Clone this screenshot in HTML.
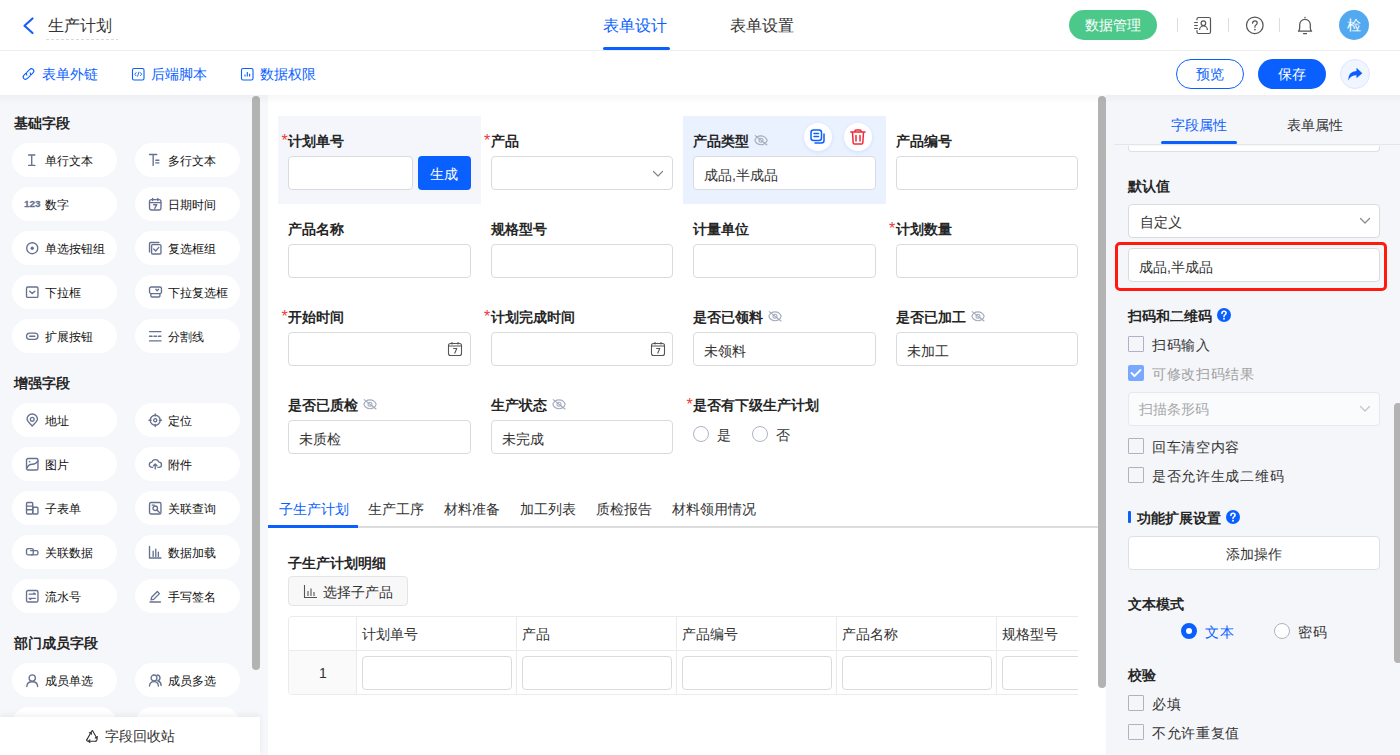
<!DOCTYPE html>
<html><head><meta charset="utf-8">
<style>
*{box-sizing:border-box;margin:0;padding:0}
html,body{width:1400px;height:755px;overflow:hidden;background:#fff;font-family:"Liberation Sans",sans-serif;color:#333;font-size:14px;line-height:20px}
.a{position:absolute}
.t{position:absolute;white-space:nowrap;font-size:14px;line-height:20px}
.b{font-weight:bold}
.blue{color:#0a5fff}
svg{position:absolute;overflow:visible}
/* header */
#hdr{position:absolute;left:0;top:0;width:1400px;height:51px;border-bottom:1px solid #eeeeee;background:#fff}
#tb{position:absolute;left:0;top:51px;width:1400px;height:44px;background:#fff}
#left{position:absolute;left:0;top:95px;width:268px;height:660px;background:#f5f6fa;overflow:hidden}
#canvas{position:absolute;left:268px;top:95px;width:838px;height:660px;background:#fff;overflow:hidden}
#right{position:absolute;left:1106px;top:95px;width:294px;height:660px;background:#f5f6fa;overflow:hidden}
.shadow{position:absolute;left:0;top:95px;width:1400px;height:9px;background:linear-gradient(rgba(0,0,0,0.032),rgba(0,0,0,0));pointer-events:none}
.pill{position:absolute;width:105px;height:34px;border-radius:17px;background:#fff}
.pill .t{font-size:12px;color:#1f2329}
.inp{position:absolute;background:#fff;border:1px solid #dadbde;border-radius:4px;height:34px}
.sb{position:absolute;background:#b3b3b3;border-radius:4px}
.cb{position:absolute;width:16px;height:16px;border:1px solid #adb3c4;border-radius:1px;background:transparent}
</style></head><body>

<!-- HEADER -->
<div id="hdr">
  <svg style="left:0;top:0" width="40" height="50"><path d="M32.5 18.5 L24.5 25.8 L32.5 33" fill="none" stroke="#1a5dff" stroke-width="2.2" stroke-linecap="round" stroke-linejoin="round"/></svg>
  <div class="t" style="left:48px;top:16px;font-size:16px;color:#333">生产计划</div>
  <svg style="left:0;top:0" width="130" height="50"><line x1="46" y1="39.5" x2="118" y2="39.5" stroke="#d9d9d9" stroke-width="1" stroke-dasharray="3 2"/></svg>
  <div class="t blue" style="left:603px;top:16px;font-size:16px">表单设计</div>
  <div class="a" style="left:603px;top:47px;width:67px;height:3px;background:#0a5fff;border-radius:1.5px"></div>
  <div class="t" style="left:730px;top:16px;font-size:16px;color:#333">表单设置</div>

  <div class="a" style="left:1069px;top:10px;width:88px;height:30px;border-radius:15px;background:#4cc98a"></div>
  <div class="t" style="left:1085px;top:15px;color:#fff">数据管理</div>
  <div class="a" style="left:1177px;top:18px;width:1px;height:14px;background:#dddddd"></div>
  <div class="a" style="left:1228px;top:18px;width:1px;height:14px;background:#dddddd"></div>
  <div class="a" style="left:1279px;top:18px;width:1px;height:14px;background:#dddddd"></div>
  <!-- contact book -->
  <svg style="left:0;top:0" width="1400" height="50">
    <path d="M1197 20.3 V19 Q1197 17.5 1198.5 17.5 H1209 Q1210.5 17.5 1210.5 19 V32 Q1210.5 33.5 1209 33.5 H1198.5 Q1197 33.5 1197 32 V30.2" fill="none" stroke="#555" stroke-width="1.2"/>
    <line x1="1194.2" y1="22.5" x2="1197.8" y2="22.5" stroke="#555" stroke-width="1.1"/>
    <line x1="1194.2" y1="25.5" x2="1197.8" y2="25.5" stroke="#555" stroke-width="1.1"/>
    <line x1="1194.2" y1="28.5" x2="1197.8" y2="28.5" stroke="#555" stroke-width="1.1"/>
    <circle cx="1203.4" cy="23.2" r="2.3" fill="none" stroke="#555" stroke-width="1.2"/>
    <path d="M1199.6 29.9 A3.9 3.9 0 0 1 1207.4 29.9" fill="none" stroke="#555" stroke-width="1.2"/>
    <!-- help -->
    <circle cx="1254.8" cy="25.3" r="8.3" fill="none" stroke="#555" stroke-width="1.25"/>
    <path d="M1252.6 23.2 Q1252.6 20.8 1254.9 20.8 Q1257.2 20.8 1257.2 23 Q1257.2 24.3 1255.6 25.2 Q1254.9 25.6 1254.9 27.2" fill="none" stroke="#555" stroke-width="1.25" stroke-linecap="round"/>
    <circle cx="1254.9" cy="29.6" r="0.85" fill="#555"/>
    <!-- bell -->
    <path d="M1298.4 31.2 H1311.6 Q1310.3 30.2 1310.3 28 V24.6 A5.3 5.3 0 0 0 1299.7 24.6 V28 Q1299.7 30.2 1298.4 31.2 Z" fill="none" stroke="#555" stroke-width="1.25" stroke-linejoin="round"/>
    <circle cx="1305" cy="17.5" r="0.75" fill="#555"/>
    <line x1="1303.4" y1="33.6" x2="1306.6" y2="33.6" stroke="#555" stroke-width="1.1" stroke-linecap="round"/>
  </svg>
  <div class="a" style="left:1339px;top:10px;width:30px;height:30px;border-radius:15px;background:#52a9f0"></div>
  <div class="t" style="left:1347px;top:15px;color:#fff">检</div>
</div>

<!-- TOOLBAR -->
<div id="tb">
  <svg style="left:0;top:0" width="400" height="44">
    <g fill="none" stroke="#0a5fff" stroke-width="1.1" stroke-linecap="round" transform="rotate(-45 28.5 23)">
      <path d="M27 20.6 H24.6 Q22 20.6 22 23 Q22 25.4 24.6 25.4 H28 Q30.2 25.4 30.4 23.4"/>
      <path d="M30 25.4 H32.4 Q35 25.4 35 23 Q35 20.6 32.4 20.6 H29 Q26.8 20.6 26.6 22.6"/>
    </g>
    <g fill="none" stroke="#0a5fff" stroke-width="1.1">
      <rect x="132.5" y="17.5" width="11.5" height="11.5" rx="1.5"/>
      <path d="M136.3 21.3 L134.8 23.2 L136.3 25.1 M140.2 21.3 L141.7 23.2 L140.2 25.1 M139 20.8 L137.5 25.6" stroke-width="0.9"/>
      <rect x="241.5" y="17.5" width="11.5" height="11.5" rx="1.5"/>
      <path d="M245 25.5 V23.5 M247.3 25.5 V21 M249.6 25.5 V22.8" stroke-width="1.1"/>
    </g>
  </svg>
  <div class="t blue" style="left:42px;top:13px">表单外链</div>
  <div class="t blue" style="left:151px;top:13px">后端脚本</div>
  <div class="t blue" style="left:260px;top:13px">数据权限</div>

  <div class="a" style="left:1176px;top:8px;width:68px;height:30px;border-radius:15px;border:1px solid #0a5fff;background:#fff"></div>
  <div class="t blue" style="left:1196px;top:13px">预览</div>
  <div class="a" style="left:1258px;top:8px;width:68px;height:30px;border-radius:15px;background:#0a5fff"></div>
  <div class="t" style="left:1278px;top:13px;color:#fff">保存</div>
  <div class="a" style="left:1340px;top:8px;width:30px;height:30px;border-radius:15px;background:#f0f5ff;border:1px solid #dbe6ff"></div>
  <svg style="left:0;top:0" width="1400" height="44"><path d="M1348 29.5 Q1348.3 20.3 1356.5 20 L1356.5 16.8 L1362.3 22.2 L1356.5 27.3 L1356.5 24.2 Q1350.8 24.2 1348 29.5 Z" fill="#0a5fff"/></svg>
</div>


<div class="a" style="left:0px;top:95px;width:268px;height:660px;background:#f6f7fb"></div>
<div class="t" style="left:14px;top:113px;font-size:14px;color:#262626;font-weight:bold;">基础字段</div>
<div class="t" style="left:14px;top:373px;font-size:14px;color:#262626;font-weight:bold;">增强字段</div>
<div class="t" style="left:14px;top:633px;font-size:14px;color:#262626;font-weight:bold;">部门成员字段</div>
<div class="pill" style="left:12px;top:143px"></div>
<svg style="left:26px;top:153.5px" width="14" height="14"><g transform="scale(1.04)"><g fill="none" stroke="#65718f" stroke-width="1.3" stroke-linecap="round" stroke-linejoin="round"><path d="M2.5 1 H8.5 M5.5 1 V11 M2.5 11 H8.5"/></g></g></svg>
<div class="t" style="left:45px;top:151px;font-size:12px;color:#111;">单行文本</div>
<div class="pill" style="left:135px;top:143px"></div>
<svg style="left:149px;top:153.5px" width="14" height="14"><g transform="scale(1.04)"><g fill="none" stroke="#65718f" stroke-width="1.3" stroke-linecap="round" stroke-linejoin="round"><path d="M0.5 0.5 H7.5 M4 0.5 V11 M6.5 6 H9.5 M6.5 8.6 H9.5"/></g></g></svg>
<div class="t" style="left:168px;top:151px;font-size:12px;color:#111;">多行文本</div>
<div class="pill" style="left:12px;top:187px"></div>
<svg style="left:26px;top:197.5px" width="14" height="14"><g transform="scale(1.04)"><text x="-2" y="8.8" font-family="Liberation Sans" font-weight="bold" font-size="9.6" fill="#65718f" stroke="#65718f" stroke-width="0.25">123</text></g></svg>
<div class="t" style="left:45px;top:195px;font-size:12px;color:#111;">数字</div>
<div class="pill" style="left:135px;top:187px"></div>
<svg style="left:149px;top:197.5px" width="14" height="14"><g transform="scale(1.04)"><g fill="none" stroke="#65718f" stroke-width="1.3" stroke-linecap="round" stroke-linejoin="round"><rect x="0.5" y="1.5" width="11" height="10" rx="1.8"/><path d="M0.5 4.5 H11.5 M3.5 0.3 V2.5 M8.5 0.3 V2.5 M4.5 6.5 H7.5 L5.5 10"/></g></g></svg>
<div class="t" style="left:168px;top:195px;font-size:12px;color:#111;">日期时间</div>
<div class="pill" style="left:12px;top:231px"></div>
<svg style="left:26px;top:241.5px" width="14" height="14"><g transform="scale(1.04)"><g fill="none" stroke="#65718f" stroke-width="1.3" stroke-linecap="round" stroke-linejoin="round"><circle cx="6" cy="6" r="5.3"/></g><circle cx="6" cy="6" r="1.6" fill="#65718f"/></g></svg>
<div class="t" style="left:45px;top:239px;font-size:12px;color:#111;">单选按钮组</div>
<div class="pill" style="left:135px;top:231px"></div>
<svg style="left:149px;top:241.5px" width="14" height="14"><g transform="scale(1.04)"><g fill="none" stroke="#65718f" stroke-width="1.3" stroke-linecap="round" stroke-linejoin="round"><path d="M0.5 9.5 V1.5 Q0.5 0.5 1.5 0.5 H9.5"/><rect x="2.5" y="2.5" width="9" height="9" rx="1"/><path d="M4.6 6.8 L6.4 8.6 L9.4 5.2"/></g></g></svg>
<div class="t" style="left:168px;top:239px;font-size:12px;color:#111;">复选框组</div>
<div class="pill" style="left:12px;top:275px"></div>
<svg style="left:26px;top:285.5px" width="14" height="14"><g transform="scale(1.04)"><g fill="none" stroke="#65718f" stroke-width="1.3" stroke-linecap="round" stroke-linejoin="round"><rect x="0.5" y="1" width="11" height="10" rx="1.2"/><path d="M3.5 5 L6 7.3 L8.5 5"/></g></g></svg>
<div class="t" style="left:45px;top:283px;font-size:12px;color:#111;">下拉框</div>
<div class="pill" style="left:135px;top:275px"></div>
<svg style="left:149px;top:285.5px" width="14" height="14"><g transform="scale(1.04)"><g fill="none" stroke="#65718f" stroke-width="1.3" stroke-linecap="round" stroke-linejoin="round"><rect x="0.5" y="1" width="11.5" height="6.3" rx="1.6"/><path d="M6.6 3.2 L7.9 4.6 L9.2 3.2 M1.8 7.3 V9.5 Q1.8 10.6 2.9 10.6 H9.4 Q10.5 10.6 10.5 9.5 V7.3"/></g></g></svg>
<div class="t" style="left:168px;top:283px;font-size:12px;color:#111;">下拉复选框</div>
<div class="pill" style="left:12px;top:319px"></div>
<svg style="left:26px;top:329.5px" width="14" height="14"><g transform="scale(1.04)"><g fill="none" stroke="#65718f" stroke-width="1.3" stroke-linecap="round" stroke-linejoin="round"><rect x="0.5" y="3" width="11" height="6" rx="3"/><path d="M3.5 6 H8.5"/></g></g></svg>
<div class="t" style="left:45px;top:327px;font-size:12px;color:#111;">扩展按钮</div>
<div class="pill" style="left:135px;top:319px"></div>
<svg style="left:149px;top:329.5px" width="14" height="14"><g transform="scale(1.04)"><g fill="none" stroke="#65718f" stroke-width="1.3" stroke-linecap="round" stroke-linejoin="round"><path d="M0.5 1.5 H11.5 M0.5 10.5 H11.5 M0.5 6 H3 M4.8 6 H7.2 M9 6 H11.5"/></g></g></svg>
<div class="t" style="left:168px;top:327px;font-size:12px;color:#111;">分割线</div>
<div class="pill" style="left:12px;top:403px"></div>
<svg style="left:26px;top:413.5px" width="14" height="14"><g transform="scale(1.04)"><g fill="none" stroke="#65718f" stroke-width="1.3" stroke-linecap="round" stroke-linejoin="round"><path d="M6 11.5 Q1 6.5 1 5 A5 5 0 0 1 11 5 Q11 6.5 6 11.5 Z"/><circle cx="6" cy="5" r="1.8"/></g></g></svg>
<div class="t" style="left:45px;top:411px;font-size:12px;color:#111;">地址</div>
<div class="pill" style="left:135px;top:403px"></div>
<svg style="left:149px;top:413.5px" width="14" height="14"><g transform="scale(1.04)"><g fill="none" stroke="#65718f" stroke-width="1.3" stroke-linecap="round" stroke-linejoin="round"><circle cx="6" cy="6" r="4.8"/><circle cx="6" cy="6" r="1.5"/><path d="M6 0 V2 M6 10 V12 M0 6 H2 M10 6 H12"/></g></g></svg>
<div class="t" style="left:168px;top:411px;font-size:12px;color:#111;">定位</div>
<div class="pill" style="left:12px;top:447px"></div>
<svg style="left:26px;top:457.5px" width="14" height="14"><g transform="scale(1.04)"><g fill="none" stroke="#65718f" stroke-width="1.3" stroke-linecap="round" stroke-linejoin="round"><rect x="0.5" y="0.5" width="11" height="11" rx="1.5"/><path d="M1 9.5 Q2.5 6 6 6 Q9.5 6 11.3 3"/><path d="M3.3 3.3 L3.6 3.6"/></g></g></svg>
<div class="t" style="left:45px;top:455px;font-size:12px;color:#111;">图片</div>
<div class="pill" style="left:135px;top:447px"></div>
<svg style="left:149px;top:457.5px" width="14" height="14"><g transform="scale(1.04)"><g fill="none" stroke="#65718f" stroke-width="1.3" stroke-linecap="round" stroke-linejoin="round"><path d="M3.5 9 H2.8 A2.5 2.5 0 0 1 2.8 4 A3.5 3.5 0 0 1 9.5 4 A2.5 2.5 0 0 1 9.5 9 H8.5"/><path d="M6 10.5 V6 M4.3 7.5 L6 5.8 L7.7 7.5"/></g></g></svg>
<div class="t" style="left:168px;top:455px;font-size:12px;color:#111;">附件</div>
<div class="pill" style="left:12px;top:491px"></div>
<svg style="left:26px;top:501.5px" width="14" height="14"><g transform="scale(1.04)"><g fill="none" stroke="#65718f" stroke-width="1.3" stroke-linecap="round" stroke-linejoin="round"><rect x="0.5" y="0.5" width="6" height="11" rx="1"/><path d="M0.5 4 H6.5 M0.5 7.5 H6.5"/><rect x="6.5" y="5" width="5" height="6.5" rx="1"/></g></g></svg>
<div class="t" style="left:45px;top:499px;font-size:12px;color:#111;">子表单</div>
<div class="pill" style="left:135px;top:491px"></div>
<svg style="left:149px;top:501.5px" width="14" height="14"><g transform="scale(1.04)"><g fill="none" stroke="#65718f" stroke-width="1.3" stroke-linecap="round" stroke-linejoin="round"><rect x="0.5" y="0.5" width="11" height="11" rx="1.5"/><circle cx="6" cy="6" r="2.2"/><path d="M7.6 7.6 L10 10 M3 3 H5"/></g></g></svg>
<div class="t" style="left:168px;top:499px;font-size:12px;color:#111;">关联查询</div>
<div class="pill" style="left:12px;top:535px"></div>
<svg style="left:26px;top:545.5px" width="14" height="14"><g transform="scale(1.04)"><g fill="none" stroke="#65718f" stroke-width="1.3" stroke-linecap="round" stroke-linejoin="round"><rect x="0.5" y="2.5" width="6.5" height="6" rx="1.5"/><path d="M4.5 4.5 H10 Q11.5 4.5 11.5 6 V7 Q11.5 8.5 10 8.5 H5"/></g></g></svg>
<div class="t" style="left:45px;top:543px;font-size:12px;color:#111;">关联数据</div>
<div class="pill" style="left:135px;top:535px"></div>
<svg style="left:149px;top:545.5px" width="14" height="14"><g transform="scale(1.04)"><g fill="none" stroke="#65718f" stroke-width="1.3" stroke-linecap="round" stroke-linejoin="round"><path d="M0.5 0.5 V11.5 H11.5 M4 10 V5 M6.5 10 V3 M9 10 V6"/></g></g></svg>
<div class="t" style="left:168px;top:543px;font-size:12px;color:#111;">数据加载</div>
<div class="pill" style="left:12px;top:579px"></div>
<svg style="left:26px;top:589.5px" width="14" height="14"><g transform="scale(1.04)"><g fill="none" stroke="#65718f" stroke-width="1.3" stroke-linecap="round" stroke-linejoin="round"><rect x="0.5" y="0.5" width="11" height="11" rx="1.5"/><path d="M3 4 H9 L7.5 3 M9 8 H3 L4.5 9"/></g></g></svg>
<div class="t" style="left:45px;top:587px;font-size:12px;color:#111;">流水号</div>
<div class="pill" style="left:135px;top:579px"></div>
<svg style="left:149px;top:589.5px" width="14" height="14"><g transform="scale(1.04)"><g fill="none" stroke="#65718f" stroke-width="1.3" stroke-linecap="round" stroke-linejoin="round"><path d="M1 11.5 H11 M2 9.5 L2.5 7 L8 1.5 L10 3.5 L4.5 9 Z"/></g></g></svg>
<div class="t" style="left:168px;top:587px;font-size:12px;color:#111;">手写签名</div>
<div class="pill" style="left:12px;top:663px"></div>
<svg style="left:26px;top:673.5px" width="14" height="14"><g transform="scale(1.04)"><g fill="none" stroke="#65718f" stroke-width="1.3" stroke-linecap="round" stroke-linejoin="round"><circle cx="6" cy="3.8" r="3"/><path d="M0.8 12 Q1 7.5 6 7.5 Q11 7.5 11.2 12"/></g></g></svg>
<div class="t" style="left:45px;top:671px;font-size:12px;color:#111;">成员单选</div>
<div class="pill" style="left:135px;top:663px"></div>
<svg style="left:149px;top:673.5px" width="14" height="14"><g transform="scale(1.04)"><g fill="none" stroke="#65718f" stroke-width="1.3" stroke-linecap="round" stroke-linejoin="round"><circle cx="4.8" cy="3.8" r="2.8"/><path d="M0.5 11.5 Q0.8 7.3 4.8 7.3 Q8.8 7.3 9 11.5 M8 1 A2.8 2.8 0 0 1 8.5 6.5 Q11.5 7.5 11.7 11"/></g></g></svg>
<div class="t" style="left:168px;top:671px;font-size:12px;color:#111;">成员多选</div>
<div class="pill" style="left:12px;top:707px"></div>
<div class="pill" style="left:135px;top:707px"></div>
<div class="a" style="left:252px;top:96px;width:8px;height:574px;background:#b3b3b3;border-radius:4px"></div>
<div class="a" style="left:0px;top:717px;width:260px;height:38px;background:#fff;box-shadow:0 -2px 6px rgba(0,0,0,0.06)"></div>
<svg style="left:85px;top:729px" width="15" height="14"><g fill="none" stroke="#333" stroke-width="1.1" stroke-linecap="round" stroke-linejoin="round"><path d="M7.6 1.8 L11.9 9.2 M10.2 8.9 L11.9 9.2 L12.4 7.5"/><path d="M10.8 12.2 H3.4 M4.9 10.9 L3.4 12.2 L4.9 13.5"/><path d="M1.9 10.6 L6 3.5 M4.3 3.8 L6 3.5 L6.6 5.2"/><path d="M1.9 10.6 Q1.2 12.2 3 12.2 M11.9 9.2 Q12.8 10.8 10.8 12.2 M6 3.5 Q7 1.2 7.6 1.8"/></g></svg>
<div class="t" style="left:105px;top:726px;font-size:14px;color:#333;">字段回收站</div>
<div class="a" style="left:268px;top:95px;width:830px;height:660px;background:#fff"></div>
<div class="a" style="left:278px;top:116px;width:203px;height:88px;background:#f4f6fb"></div>
<div class="t" style="left:281.5px;top:131px;font-size:14px;color:#ec3a3a;font-size:16px">*</div>
<div class="t" style="left:288px;top:131px;font-size:14px;color:#262626;font-weight:bold;">计划单号</div>
<div class="inp" style="left:288px;top:156px;width:125px"></div>
<div class="a" style="left:418px;top:156px;width:53px;height:34px;background:#0a5fff;border-radius:4px"></div>
<div class="t" style="left:430px;top:164px;font-size:14px;color:#fff;">生成</div>
<div class="t" style="left:484.0px;top:131px;font-size:14px;color:#ec3a3a;font-size:16px">*</div>
<div class="t" style="left:490.5px;top:131px;font-size:14px;color:#262626;font-weight:bold;">产品</div>
<div class="inp" style="left:490.5px;top:156px;width:182.5px"></div>
<svg style="left:652.5px;top:171px" width="10" height="6"><path d="M0.5 0.5 L5 5 L9.5 0.5" fill="none" stroke="#888" stroke-width="1.2" stroke-linecap="round" stroke-linejoin="round"/></svg>
<div class="a" style="left:683px;top:116px;width:203px;height:88px;background:#ebf2ff"></div>
<div class="t" style="left:693px;top:131px;font-size:14px;color:#262626;font-weight:bold;">产品类型</div>
<svg style="left:754px;top:134.5px" width="14" height="11"><g fill="none" stroke="#a3abbd" stroke-width="1.05" stroke-linecap="round"><path d="M0.8 5.3 C3 -0.6 11 -0.6 13.2 5.3 C11 11.2 3 11.2 0.8 5.3 Z"/><circle cx="7" cy="5.3" r="2"/><path d="M1.2 0.6 L13 10"/></g></svg>
<div class="inp" style="left:693px;top:156px;width:182.5px"></div>
<div class="t" style="left:704px;top:165px;font-size:14px;color:#333;">成品,半成品</div>
<div class="t" style="left:895.5px;top:131px;font-size:14px;color:#262626;font-weight:bold;">产品编号</div>
<div class="inp" style="left:895.5px;top:156px;width:182.5px"></div>
<div class="t" style="left:288px;top:219px;font-size:14px;color:#262626;font-weight:bold;">产品名称</div>
<div class="inp" style="left:288px;top:244px;width:182.5px"></div>
<div class="t" style="left:490.5px;top:219px;font-size:14px;color:#262626;font-weight:bold;">规格型号</div>
<div class="inp" style="left:490.5px;top:244px;width:182.5px"></div>
<div class="t" style="left:693px;top:219px;font-size:14px;color:#262626;font-weight:bold;">计量单位</div>
<div class="inp" style="left:693px;top:244px;width:182.5px"></div>
<div class="t" style="left:889.0px;top:219px;font-size:14px;color:#ec3a3a;font-size:16px">*</div>
<div class="t" style="left:895.5px;top:219px;font-size:14px;color:#262626;font-weight:bold;">计划数量</div>
<div class="inp" style="left:895.5px;top:244px;width:182.5px"></div>
<div class="t" style="left:281.5px;top:307px;font-size:14px;color:#ec3a3a;font-size:16px">*</div>
<div class="t" style="left:288px;top:307px;font-size:14px;color:#262626;font-weight:bold;">开始时间</div>
<div class="inp" style="left:288px;top:332px;width:182.5px"></div>
<svg style="left:448px;top:342px" width="14" height="14"><g fill="none" stroke="#555" stroke-width="1.1" stroke-linejoin="round"><rect x="0.5" y="1.5" width="13" height="12" rx="2"/><path d="M0.5 4 H13.5 M4 0 V2.5 M10 0 V2.5"/><path d="M5.2 6.5 H8.8 L6.6 11.5"/></g></svg>
<div class="t" style="left:484.0px;top:307px;font-size:14px;color:#ec3a3a;font-size:16px">*</div>
<div class="t" style="left:490.5px;top:307px;font-size:14px;color:#262626;font-weight:bold;">计划完成时间</div>
<div class="inp" style="left:490.5px;top:332px;width:182.5px"></div>
<svg style="left:650.5px;top:342px" width="14" height="14"><g fill="none" stroke="#555" stroke-width="1.1" stroke-linejoin="round"><rect x="0.5" y="1.5" width="13" height="12" rx="2"/><path d="M0.5 4 H13.5 M4 0 V2.5 M10 0 V2.5"/><path d="M5.2 6.5 H8.8 L6.6 11.5"/></g></svg>
<div class="t" style="left:693px;top:307px;font-size:14px;color:#262626;font-weight:bold;">是否已领料</div>
<svg style="left:768px;top:310.5px" width="14" height="11"><g fill="none" stroke="#a3abbd" stroke-width="1.05" stroke-linecap="round"><path d="M0.8 5.3 C3 -0.6 11 -0.6 13.2 5.3 C11 11.2 3 11.2 0.8 5.3 Z"/><circle cx="7" cy="5.3" r="2"/><path d="M1.2 0.6 L13 10"/></g></svg>
<div class="inp" style="left:693px;top:332px;width:182.5px"></div>
<div class="t" style="left:704px;top:341px;font-size:14px;color:#333;">未领料</div>
<div class="t" style="left:895.5px;top:307px;font-size:14px;color:#262626;font-weight:bold;">是否已加工</div>
<svg style="left:970.5px;top:310.5px" width="14" height="11"><g fill="none" stroke="#a3abbd" stroke-width="1.05" stroke-linecap="round"><path d="M0.8 5.3 C3 -0.6 11 -0.6 13.2 5.3 C11 11.2 3 11.2 0.8 5.3 Z"/><circle cx="7" cy="5.3" r="2"/><path d="M1.2 0.6 L13 10"/></g></svg>
<div class="inp" style="left:895.5px;top:332px;width:182.5px"></div>
<div class="t" style="left:906.5px;top:341px;font-size:14px;color:#333;">未加工</div>
<div class="t" style="left:288px;top:395px;font-size:14px;color:#262626;font-weight:bold;">是否已质检</div>
<svg style="left:363px;top:398.5px" width="14" height="11"><g fill="none" stroke="#a3abbd" stroke-width="1.05" stroke-linecap="round"><path d="M0.8 5.3 C3 -0.6 11 -0.6 13.2 5.3 C11 11.2 3 11.2 0.8 5.3 Z"/><circle cx="7" cy="5.3" r="2"/><path d="M1.2 0.6 L13 10"/></g></svg>
<div class="inp" style="left:288px;top:420px;width:182.5px"></div>
<div class="t" style="left:299px;top:429px;font-size:14px;color:#333;">未质检</div>
<div class="t" style="left:490.5px;top:395px;font-size:14px;color:#262626;font-weight:bold;">生产状态</div>
<svg style="left:551.5px;top:398.5px" width="14" height="11"><g fill="none" stroke="#a3abbd" stroke-width="1.05" stroke-linecap="round"><path d="M0.8 5.3 C3 -0.6 11 -0.6 13.2 5.3 C11 11.2 3 11.2 0.8 5.3 Z"/><circle cx="7" cy="5.3" r="2"/><path d="M1.2 0.6 L13 10"/></g></svg>
<div class="inp" style="left:490.5px;top:420px;width:182.5px"></div>
<div class="t" style="left:501.5px;top:429px;font-size:14px;color:#333;">未完成</div>
<div class="t" style="left:686.5px;top:395px;font-size:14px;color:#ec3a3a;font-size:16px">*</div>
<div class="t" style="left:693px;top:395px;font-size:14px;color:#262626;font-weight:bold;">是否有下级生产计划</div>
<div class="a" style="left:693px;top:426px;width:16px;height:16px;border:1px solid #adb3c4;border-radius:50%;background:#fff"></div>
<div class="t" style="left:717px;top:425px;font-size:14px;color:#333;">是</div>
<div class="a" style="left:752px;top:426px;width:16px;height:16px;border:1px solid #adb3c4;border-radius:50%;background:#fff"></div>
<div class="t" style="left:776px;top:425px;font-size:14px;color:#333;">否</div>
<div class="a" style="left:804px;top:123px;width:28px;height:28px;background:#fff;border-radius:50%;box-shadow:0 1px 4px rgba(10,95,255,0.12)"></div>
<div class="a" style="left:844px;top:123px;width:28px;height:28px;background:#fff;border-radius:50%;box-shadow:0 1px 4px rgba(10,95,255,0.12)"></div>
<svg style="left:810px;top:129px" width="16" height="16"><g fill="none" stroke="#0a5fff" stroke-width="1.5" stroke-linecap="round" stroke-linejoin="round"><rect x="1" y="1" width="10.5" height="10.5" rx="2.5"/><path d="M4 4.6 H8.5 M4 7.6 H8.5 M14 5 V11.5 Q14 14 11.5 14 H5"/></g></svg>
<svg style="left:850px;top:129px" width="16" height="16"><g fill="none" stroke="#f02a3a" stroke-width="1.5" stroke-linecap="round" stroke-linejoin="round"><path d="M0.8 3 H15 M5 3 V1.8 Q5 1 6 1 H10 Q11 1 11 1.8 V3 M2.5 3.5 L3.2 14 Q3.3 15 4.3 15 H11.7 Q12.7 15 12.8 14 L13.5 3.5 M6 6.5 V12 M10 6.5 V12"/></g></svg>
<div class="t" style="left:279px;top:499px;font-size:14px;color:#0a5fff;">子生产计划</div>
<div class="t" style="left:368px;top:499px;font-size:14px;color:#333;">生产工序</div>
<div class="t" style="left:444px;top:499px;font-size:14px;color:#333;">材料准备</div>
<div class="t" style="left:520px;top:499px;font-size:14px;color:#333;">加工列表</div>
<div class="t" style="left:596px;top:499px;font-size:14px;color:#333;">质检报告</div>
<div class="t" style="left:672px;top:499px;font-size:14px;color:#333;">材料领用情况</div>
<div class="a" style="left:268px;top:526px;width:830px;height:2px;background:#dddddd"></div>
<div class="a" style="left:268px;top:525px;width:90px;height:3px;background:#0a5fff"></div>
<div class="t" style="left:288px;top:553px;font-size:14px;color:#262626;font-weight:bold;">子生产计划明细</div>
<div class="a" style="left:288px;top:576px;width:119.5px;height:29.5px;background:#f8f8f9;border:1px solid #e3e4e8;border-radius:4px"></div>
<svg style="left:304px;top:585px" width="14" height="13"><g fill="none" stroke="#555" stroke-width="1.1"><path d="M0.5 0 V12.5 H13 M4 11 V6 M7 11 V3.5 M10 11 V7"/></g></svg>
<div class="t" style="left:323px;top:582px;font-size:14px;color:#333;">选择子产品</div>
<div class="a" style="left:288px;top:616px;width:790px;height:79px;overflow:hidden">
<div class="a" style="left:0;top:0;width:800px;height:79px;border:1px solid #ebebeb;border-radius:4px"></div>
<div class="a" style="left:1px;top:35px;width:67px;height:43px;background:#fafafa;border-bottom-left-radius:4px"></div>
<div class="a" style="left:0;top:34px;width:800px;height:1px;background:#ebebeb"></div>
<div class="a" style="left:67.5px;top:0;width:1px;height:79px;background:#ebebeb"></div>
<div class="a" style="left:227.5px;top:0;width:1px;height:79px;background:#ebebeb"></div>
<div class="a" style="left:387.5px;top:0;width:1px;height:79px;background:#ebebeb"></div>
<div class="a" style="left:547.5px;top:0;width:1px;height:79px;background:#ebebeb"></div>
<div class="a" style="left:707.5px;top:0;width:1px;height:79px;background:#ebebeb"></div>
<div class="t" style="left:74px;top:8px;color:#333">计划单号</div>
<div class="inp" style="left:73.5px;top:40px;width:150px;height:33.5px"></div>
<div class="t" style="left:234px;top:8px;color:#333">产品</div>
<div class="inp" style="left:233.5px;top:40px;width:150px;height:33.5px"></div>
<div class="t" style="left:394px;top:8px;color:#333">产品编号</div>
<div class="inp" style="left:393.5px;top:40px;width:150px;height:33.5px"></div>
<div class="t" style="left:554px;top:8px;color:#333">产品名称</div>
<div class="inp" style="left:553.5px;top:40px;width:150px;height:33.5px"></div>
<div class="t" style="left:714px;top:8px;color:#333">规格型号</div>
<div class="inp" style="left:713.5px;top:40px;width:150px;height:33.5px"></div>
<div class="t" style="left:31px;top:47px;color:#333">1</div>
</div>
<div class="a" style="left:1098px;top:96px;width:8px;height:592px;background:#b3b3b3;border-radius:4px"></div>
<div class="a" style="left:1106px;top:95px;width:294px;height:660px;background:#f5f6fa"></div>
<div class="a" style="left:1128px;top:130px;width:252px;height:21.5px;background:#fff;border:1px solid #dcdfe6;border-top:none;border-radius:0 0 4px 4px"></div>
<div class="a" style="left:1114px;top:95px;width:286px;height:51px;background:#f5f6fa"></div>
<div class="a" style="left:1114px;top:144px;width:286px;height:1px;background:#e4e6eb"></div>
<div class="t" style="left:1171px;top:115px;font-size:14px;color:#0a5fff;">字段属性</div>
<div class="a" style="left:1161px;top:141px;width:76px;height:3px;background:#0a5fff;border-radius:1.5px"></div>
<div class="t" style="left:1287px;top:115px;font-size:14px;color:#333;">表单属性</div>
<div class="t" style="left:1128px;top:176px;font-size:14px;color:#262626;font-weight:bold;">默认值</div>
<div class="inp" style="left:1128px;top:204px;width:252px;height:33.5px"></div>
<div class="t" style="left:1140px;top:212px;font-size:14px;color:#333;">自定义</div>
<svg style="left:1360px;top:218px" width="10" height="6"><path d="M0.5 0.5 L5 5 L9.5 0.5" fill="none" stroke="#888" stroke-width="1.2" stroke-linecap="round" stroke-linejoin="round"/></svg>
<div class="a" style="left:1115px;top:241.5px;width:272px;height:49px;border:3px solid #ff1a0d;border-radius:5px"></div>
<div class="inp" style="left:1128px;top:248px;width:252px;height:33.5px"></div>
<div class="t" style="left:1139px;top:257px;font-size:14px;color:#333;">成品,半成品</div>
<div class="t" style="left:1128px;top:306px;font-size:14px;color:#262626;font-weight:bold;">扫码和二维码</div>
<svg style="left:1217px;top:308px" width="14" height="14"><circle cx="7" cy="7" r="7" fill="#0a5fff"/><path d="M4.9 5.4 Q4.9 3.2 7 3.2 Q9.1 3.2 9.1 5.1 Q9.1 6.2 7.8 6.9 Q7 7.3 7 8.5" fill="none" stroke="#fff" stroke-width="1.6" stroke-linecap="round"/><circle cx="7" cy="10.7" r="0.95" fill="#fff"/></svg>
<div class="cb" style="left:1128px;top:336px"></div>
<div class="t" style="left:1152px;top:335px;font-size:14px;color:#333;letter-spacing:0.7px">扫码输入</div>
<div class="a" style="left:1128px;top:365px;width:16px;height:16px;background:#7aa8ff;border-radius:2px"></div>
<svg style="left:1128px;top:365px" width="16" height="16"><path d="M3.5 8 L6.5 11 L12.5 5" fill="none" stroke="#fff" stroke-width="1.8" stroke-linecap="round" stroke-linejoin="round"/></svg>
<div class="t" style="left:1152px;top:364px;font-size:14px;color:#a0a0a0;letter-spacing:0.7px">可修改扫码结果</div>
<div class="a" style="left:1128px;top:392px;width:252px;height:33.5px;background:#fafbfc;border:1px solid #e6e8eb;border-radius:4px"></div>
<div class="t" style="left:1139px;top:399px;font-size:14px;color:#a8a8a8;">扫描条形码</div>
<svg style="left:1360px;top:406px" width="10" height="6"><path d="M0.5 0.5 L5 5 L9.5 0.5" fill="none" stroke="#c4c4c4" stroke-width="1.2" stroke-linecap="round" stroke-linejoin="round"/></svg>
<div class="cb" style="left:1128px;top:438px"></div>
<div class="t" style="left:1152px;top:437px;font-size:14px;color:#333;letter-spacing:0.7px">回车清空内容</div>
<div class="cb" style="left:1128px;top:467px"></div>
<div class="t" style="left:1152px;top:466px;font-size:14px;color:#333;letter-spacing:0.7px">是否允许生成二维码</div>
<div class="a" style="left:1128px;top:511px;width:3px;height:12px;background:#0a5fff;border-radius:1px"></div>
<div class="t" style="left:1137px;top:508px;font-size:14px;color:#262626;font-weight:bold;">功能扩展设置</div>
<svg style="left:1226px;top:510px" width="14" height="14"><circle cx="7" cy="7" r="7" fill="#0a5fff"/><path d="M4.9 5.4 Q4.9 3.2 7 3.2 Q9.1 3.2 9.1 5.1 Q9.1 6.2 7.8 6.9 Q7 7.3 7 8.5" fill="none" stroke="#fff" stroke-width="1.6" stroke-linecap="round"/><circle cx="7" cy="10.7" r="0.95" fill="#fff"/></svg>
<div class="a" style="left:1128px;top:536px;width:252px;height:33.5px;background:#fff;border:1px solid #dcdfe6;border-radius:4px"></div>
<div class="t" style="left:1226px;top:544px;font-size:14px;color:#333;">添加操作</div>
<div class="t" style="left:1128px;top:594px;font-size:14px;color:#262626;font-weight:bold;">文本模式</div>
<div class="a" style="left:1181px;top:623px;width:16px;height:16px;border:5px solid #0a5fff;border-radius:50%;background:#fff"></div>
<div class="t" style="left:1205px;top:622px;font-size:14px;color:#0a5fff;letter-spacing:1px">文本</div>
<div class="a" style="left:1274px;top:623px;width:16px;height:16px;border:1px solid #adb3c4;border-radius:50%;background:#fff"></div>
<div class="t" style="left:1298px;top:622px;font-size:14px;color:#333;letter-spacing:1px">密码</div>
<div class="t" style="left:1128px;top:665px;font-size:14px;color:#262626;font-weight:bold;">校验</div>
<div class="cb" style="left:1128px;top:695px"></div>
<div class="t" style="left:1152px;top:694px;font-size:14px;color:#333;letter-spacing:0.7px">必填</div>
<div class="cb" style="left:1128px;top:724px"></div>
<div class="t" style="left:1152px;top:723px;font-size:14px;color:#333;letter-spacing:0.7px">不允许重复值</div>
<div class="a" style="left:1394px;top:403px;width:8px;height:260px;background:#b3b3b3;border-radius:4px"></div>
<div class="shadow"></div>
</body></html>
